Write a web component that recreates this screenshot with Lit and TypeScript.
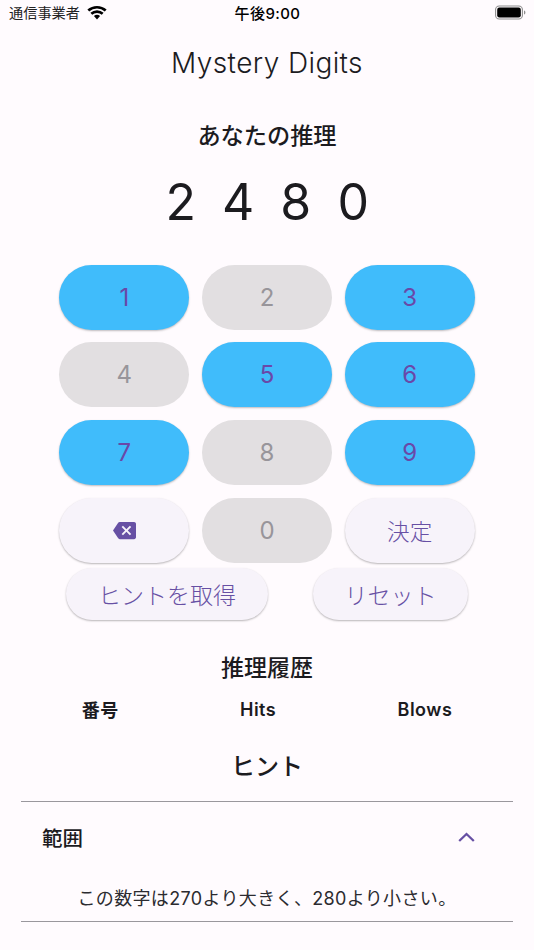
import { LitElement, html, css } from "lit";
import { customElement } from "lit/decorators.js";

@customElement("app-root")
export class AppRoot extends LitElement {
  static styles = css`
    :host {
      display: block;
      width: 534px;
      height: 950px;
      overflow: hidden;
      background: #fffbfe;
      color: #1c1b1f;
      font-family: Inter, "Noto Sans CJK JP", sans-serif;
    }
    .status {
      height: 26px;
      box-sizing: border-box;
      display: grid;
      grid-template-columns: 1fr auto 1fr;
      align-items: center;
      padding: 0 8px 2px 9px;
      font-size: 14px;
      color: #000;
    }
    .carrier { display: flex; align-items: center; gap: 7px; font-size: 14.2px; color: #222; }
    .time { font-weight: 500; font-size: 15px; letter-spacing: 0.4px; }
    .battery { justify-self: end; display: block; }
    .title {
      height: 74px;
      box-sizing: border-box;
      padding-bottom: 1px;
      display: flex;
      align-items: center;
      justify-content: center;
      font-size: 28px;
      letter-spacing: 0.4px;
      font-weight: 300;
    }
    .guess-title {
      margin-top: 18px;
      height: 36px;
      line-height: 36px;
      text-align: center;
      font-size: 23.2px;
      font-weight: 500;
    }
    .digits {
      margin-top: 18px;
      height: 60px;
      display: flex;
      justify-content: center;
      align-items: center;
      font-size: 50px;
      font-weight: 400;
    }
    .digits span { width: 57.5px; text-align: center; }
    .pad {
      margin: 32.7px 0 0 59.3px;
      display: grid;
      grid-template-columns: repeat(3, 130px);
      grid-auto-rows: 65px;
      column-gap: 12.7px;
      row-gap: 12.8px;
    }
    .btn {
      display: flex;
      align-items: center;
      justify-content: center;
      border-radius: 999px;
      font-size: 24px;
      color: #6750a4;
    }
    .on {
      background: #40bcfb;
      color: #6a48a8;
      box-shadow: 0 1px 2px rgba(0, 0, 0, 0.25);
    }
    .off { background: #e2dfe1; color: #98959a; }
    .plain {
      background: #f7f3fa;
      box-shadow: 0 1px 2px rgba(0, 0, 0, 0.28);
    }
    .label { font-size: 22.6px; font-weight: 300; }
    .actions {
      margin-top: 5px;
      padding: 0 66px;
      display: flex;
      justify-content: space-between;
    }
    .actions .btn { height: 52px; font-size: 23px; font-weight: 300; }
    .hint-btn { width: 202px; }
    .reset-btn { width: 155px; }
    .history-title {
      margin-top: 32px;
      height: 32px;
      line-height: 32px;
      text-align: center;
      font-size: 23px;
      font-weight: 500;
    }
    .cols {
      margin: 13px 21px 0;
      height: 24px;
      display: flex;
      justify-content: space-around;
      align-items: center;
      font-size: 18px;
      font-weight: 600;
      letter-spacing: 0.5px;
    }
    .hint-title {
      margin-top: 30px;
      height: 32px;
      line-height: 32px;
      text-align: center;
      font-size: 24px;
      font-weight: 500;
    }
    .panel {
      margin: 18px 21px 0;
      border-top: 1.4px solid #9a979d;
      border-bottom: 1.4px solid #9a979d;
    }
    .panel-head {
      height: 72px;
      box-sizing: border-box;
      padding: 0 38px 2px 21px;
      display: flex;
      align-items: center;
      justify-content: space-between;
      font-size: 20.5px;
      font-weight: 500;
    }
    .panel-body {
      height: 47px;
      box-sizing: border-box;
      padding-bottom: 2px;
      display: flex;
      align-items: center;
      justify-content: center;
      font-size: 18px;
      color: #2c2b30;
      letter-spacing: 0.35px;
    }
  `;

  render() {
    const pad: [string, boolean][] = [
      ["1", true], ["2", false], ["3", true],
      ["4", false], ["5", true], ["6", true],
      ["7", true], ["8", false], ["9", true],
    ];
    return html`
      <div class="status">
        <div class="carrier">
          <span>通信事業者</span>
          <svg width="20" height="15" viewBox="0 0 20 15">
            <path d="M10 14.600 6.900 11.100a4.600 4.600 0 0 1 6.200 0z" fill="#000"/>
            <path d="M1.300 5.600a13 13 0 0 1 17.400 0M4.300 8.800a8.600 8.600 0 0 1 11.400 0" fill="none" stroke="#000" stroke-width="2.700"/>
          </svg>
        </div>
        <div class="time">午後9:00</div>
        <svg class="battery" width="31" height="15" viewBox="0 0 31 15">
          <rect x="0.6" y="1" width="26.8" height="13" rx="3.6" fill="none" stroke="#8e8e8e" stroke-width="1.1"/>
          <rect x="2.2" y="2.6" width="23.6" height="9.8" rx="2.2" fill="#000"/>
          <path d="M29 5.500c1 .3 1.400 1.100 1.400 2s-.4 1.700-1.400 2z" fill="#8e8e8e"/>
        </svg>
      </div>
      <div class="title">Mystery Digits</div>
      <div class="guess-title">あなたの推理</div>
      <div class="digits"><span>2</span><span>4</span><span>8</span><span>0</span></div>
      <div class="pad">
        ${pad.map(([n, on]) => html`<div class="btn ${on ? "on" : "off"}">${n}</div>`)}
        <div class="btn plain">
          <svg width="23" height="23" viewBox="0 0 24 24">
            <path fill="#6750a4" d="M22 3H7c-.69 0-1.230.35-1.590.88L0 12l5.410 8.110c.36.53.9.89 1.590.89h15c1.100 0 2-.9 2-2V5c0-1.100-.9-2-2-2zm-3 12.590L17.590 17 14 13.410 10.410 17 9 15.590 12.590 12 9 8.410 10.410 7 14 10.590 17.590 7 19 8.410 15.410 12 19 15.590z"/>
          </svg>
        </div>
        <div class="btn off">0</div>
        <div class="btn plain label">決定</div>
      </div>
      <div class="actions">
        <div class="btn plain hint-btn">ヒントを取得</div>
        <div class="btn plain reset-btn">リセット</div>
      </div>
      <div class="history-title">推理履歴</div>
      <div class="cols"><span>番号</span><span>Hits</span><span>Blows</span></div>
      <div class="hint-title">ヒント</div>
      <div class="panel">
        <div class="panel-head">
          <span>範囲</span>
          <svg width="17" height="10" viewBox="0 0 17 10">
            <path d="M1.200 9 8.500 2 15.800 9" fill="none" stroke="#6750a4" stroke-width="2.300"/>
          </svg>
        </div>
        <div class="panel-body">この数字は270より大きく、280より小さい。</div>
      </div>
    `;
  }
}
